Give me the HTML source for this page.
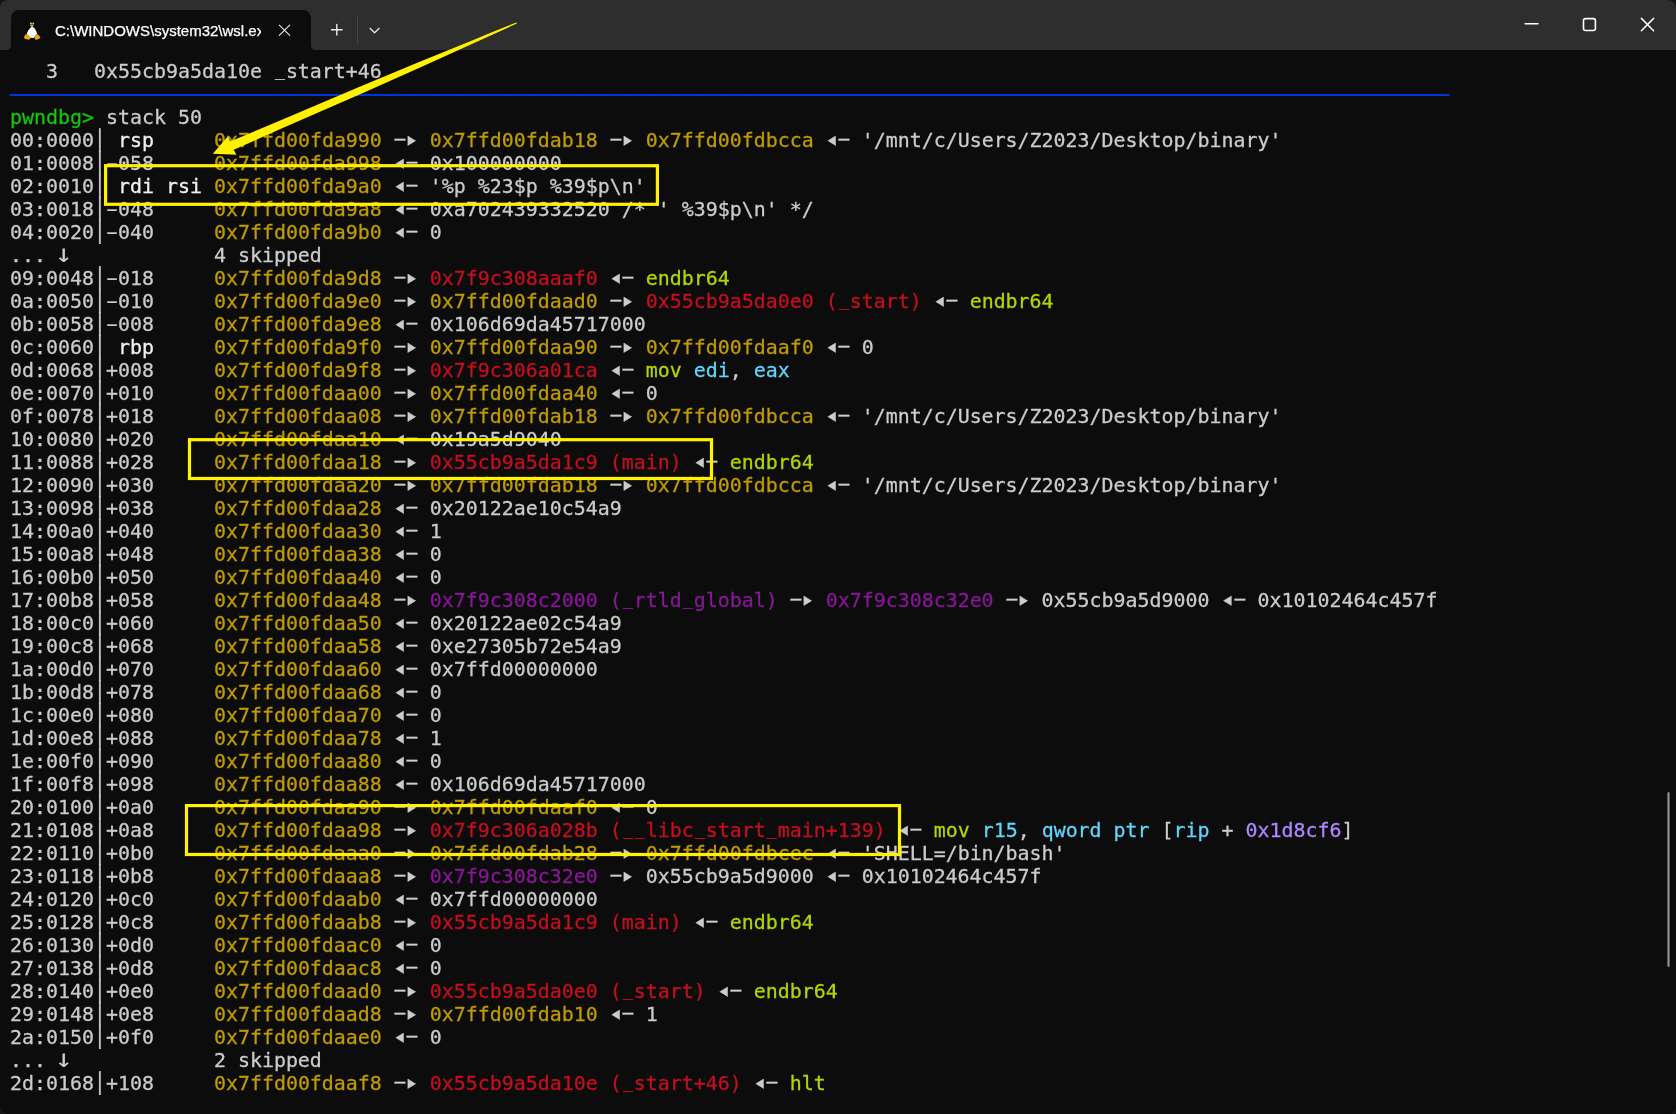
<!DOCTYPE html>
<html lang="en">
<head>
<meta charset="utf-8">
<title>C:\WINDOWS\system32\wsl.exe</title>
<style>
html,body{margin:0;padding:0;background:#161616;}
body{width:1676px;height:1114px;overflow:hidden;position:relative;}
#win{position:absolute;left:0;top:0;width:1676px;height:1114px;background:#0c0c0c;overflow:hidden;border-radius:8px;}
#titlebar{position:absolute;left:0;top:0;width:1676px;height:50px;background:#2e2e2e;}
#tabtitle{-webkit-text-stroke:0.25px #fff;will-change:transform;position:absolute;left:54.5px;top:18.6px;width:205.5px;height:24px;line-height:24px;overflow:hidden;white-space:nowrap;color:#fff;font-family:"Liberation Sans",sans-serif;font-size:15px;}
#term{-webkit-text-stroke:0.28px;will-change:transform;position:absolute;left:10px;top:60px;width:1650px;font-family:"DejaVu Sans Mono", "Liberation Mono", monospace;font-size:19.93px;line-height:23px;color:#cccccc;}
.ln{height:23px;white-space:pre;}
.y{color:#c19c00;}
.r{color:#c50f1f;}
.g{color:#afd700;}
.c{color:#5fd7ff;}
.p{color:#881798;}
.l{color:#af87ff;}
.b{color:#f2f2f2;}
.pg{color:#16c60c;}
.line{color:#0037da;display:inline-block;height:23px;vertical-align:top;position:relative;top:1px;background:linear-gradient(to bottom,transparent 10px,#0037da 10px,#0037da 12px,transparent 12px);}
.bar{color:#cccccc;}
svg{position:absolute;left:0;top:0;overflow:visible;}
.d,.t{display:inline-block;width:12px;height:23px;vertical-align:top;position:relative;}
.d{-webkit-text-stroke:0.3px currentColor;transform:translateY(-1.8px) scaleX(0.9);}
.t{transform:translateY(-1.5px) scaleY(1.22);transform-origin:50% 58%;}
.dn,.hy,.us{display:inline-block;width:12px;height:23px;vertical-align:top;position:relative;}
.dn{transform:scale(1.5,1.25);transform-origin:50% 78%;-webkit-text-stroke:0;}
.hy{transform:scaleX(1.8);-webkit-text-stroke:0.2px currentColor;}
#sb{position:absolute;left:1667px;top:792px;width:3px;height:175px;border-radius:1.5px;background:linear-gradient(to right,#585858 0,#585858 33%,#939393 33%,#939393 67%,#585858 67%);}
.us{transform:translateY(-2.6px) scaleX(0.82);-webkit-text-stroke:0.45px currentColor;}

</style>
</head>
<body>
<div id="win">
<div id="titlebar">
<svg id="chrome" width="1676" height="60" viewBox="0 0 1676 60">
<path id="tabshape" fill="#0c0c0c" d="M6.5,50 A4.5,4.5 0 0 0 11,45.5 L11,18 A8,8 0 0 1 19,10 L303,10 A8,8 0 0 1 311,18 L311,45.5 A4.5,4.5 0 0 0 315.5,50 Z"/>
<g id="tux">
<ellipse cx="32.4" cy="24.6" rx="3.3" ry="4.4" fill="#000"/>
<path d="M32.1,24 C27,27 25.2,33 25.6,38.5 L38.8,38.5 C39.2,33 37.2,27 32.1,24 Z" fill="#000"/>
<path d="M32.2,26.5 C30,27.6 27.1,31.6 26.9,34 C27.2,35.4 28.8,35.8 29.6,36.9 C30.4,37.9 31.2,38.2 32.4,38.1 C33.8,38.1 34.6,37.6 35,36.6 C35.2,35.2 36.4,34.6 37.2,33.8 C36.8,31 34.6,27.6 32.2,26.5 Z" fill="#fff"/>
<ellipse cx="30.9" cy="23.5" rx="0.9" ry="1" fill="#e6e6e6"/>
<ellipse cx="33.3" cy="23.5" rx="0.9" ry="1" fill="#e6e6e6"/>
<path d="M30,25 C30.8,24.3 32.8,24.3 33.8,25 C33.4,26.4 32.4,27 31.8,27 C31,27 30.2,26.2 30,25 Z" fill="#e5a712"/>
<path d="M24,37.6 C24.4,35.6 25.6,34 27,33.8 C28.2,34 29.6,36.4 30.3,38 C30.4,39.3 29.4,39.8 28,39.6 C26.4,39.4 24.2,39 24,37.6 Z" fill="#e5a712"/>
<path d="M35,35 C35.4,34.2 37.2,34 38,34.6 C38.8,35.6 40.2,36.6 40.4,37.6 C40.2,38.4 37.6,39.8 36.2,39.8 C34.8,39.6 34.6,38.4 34.8,37.2 Z" fill="#e5a712"/>
</g>
<g fill="none" stroke="#ececec" stroke-linecap="round">
<path stroke-width="1.1" d="M279.3,25.2 L289.7,35.4 M289.7,25.2 L279.3,35.4"/>
<path stroke-width="1.4" d="M331.5,29.8 L342.1,29.8 M336.8,24.5 L336.8,35.1"/>
<path stroke-width="1.2" stroke-linejoin="round" d="M370,28.3 L374.6,32.8 L379.2,28.3"/>
</g>
<path d="M357.5,15 L357.5,44.5" stroke="#444" stroke-width="1" fill="none"/>
<g fill="none" stroke="#fff" stroke-linecap="round">
<path stroke-width="1.6" d="M1525.2,23.8 L1537.9,23.8"/>
<rect x="1583.5" y="18.6" width="11.9" height="11.9" rx="2" ry="2" stroke-width="1.6"/>
<path stroke-width="1.5" d="M1641.4,18.4 L1653.6,30.7 M1653.6,18.4 L1641.4,30.7"/>
</g>
</svg>
<div id="tabtitle">C:\WINDOWS\system32\wsl.exe</div>
</div>

<div id="term">
<div class="ln">   3   0x55cb9a5da10e <span class="us">_</span>start+46</div>
<div class="ln"><span class="line">────────────────────────────────────────────────────────────────────────────────────────────────────────────────────────</span></div>
<div class="ln"><span class="pg">pwndbg&gt; </span>stack 50</div>
<div class="ln">00:0000<span class="bar">│</span> <span class="b">rsp</span>     <span class="y">0x7ffd00fda990</span> <span class="d">—</span><span class="t">▸</span> <span class="y">0x7ffd00fdab18</span> <span class="d">—</span><span class="t">▸</span> <span class="y">0x7ffd00fdbcca</span> <span class="t">◂</span><span class="d">—</span> '/mnt/c/Users/Z2023/Desktop/binary'</div>
<div class="ln">01:0008<span class="bar">│</span><span class="hy">-</span>058     <span class="y">0x7ffd00fda998</span> <span class="t">◂</span><span class="d">—</span> 0x100000000</div>
<div class="ln">02:0010<span class="bar">│</span> <span class="b">rdi rsi</span> <span class="y">0x7ffd00fda9a0</span> <span class="t">◂</span><span class="d">—</span> '%p %23$p %39$p\n'</div>
<div class="ln">03:0018<span class="bar">│</span><span class="hy">-</span>048     <span class="y">0x7ffd00fda9a8</span> <span class="t">◂</span><span class="d">—</span> 0xa702439332520 /* ' %39$p\n' */</div>
<div class="ln">04:0020<span class="bar">│</span><span class="hy">-</span>040     <span class="y">0x7ffd00fda9b0</span> <span class="t">◂</span><span class="d">—</span> 0</div>
<div class="ln">... <span class="dn">↓</span>            4 skipped</div>
<div class="ln">09:0048<span class="bar">│</span><span class="hy">-</span>018     <span class="y">0x7ffd00fda9d8</span> <span class="d">—</span><span class="t">▸</span> <span class="r">0x7f9c308aaaf0</span> <span class="t">◂</span><span class="d">—</span> <span class="g">endbr64</span></div>
<div class="ln">0a:0050<span class="bar">│</span><span class="hy">-</span>010     <span class="y">0x7ffd00fda9e0</span> <span class="d">—</span><span class="t">▸</span> <span class="y">0x7ffd00fdaad0</span> <span class="d">—</span><span class="t">▸</span> <span class="r">0x55cb9a5da0e0 (<span class="us">_</span>start)</span> <span class="t">◂</span><span class="d">—</span> <span class="g">endbr64</span></div>
<div class="ln">0b:0058<span class="bar">│</span><span class="hy">-</span>008     <span class="y">0x7ffd00fda9e8</span> <span class="t">◂</span><span class="d">—</span> 0x106d69da45717000</div>
<div class="ln">0c:0060<span class="bar">│</span> <span class="b">rbp</span>     <span class="y">0x7ffd00fda9f0</span> <span class="d">—</span><span class="t">▸</span> <span class="y">0x7ffd00fdaa90</span> <span class="d">—</span><span class="t">▸</span> <span class="y">0x7ffd00fdaaf0</span> <span class="t">◂</span><span class="d">—</span> 0</div>
<div class="ln">0d:0068<span class="bar">│</span>+008     <span class="y">0x7ffd00fda9f8</span> <span class="d">—</span><span class="t">▸</span> <span class="r">0x7f9c306a01ca</span> <span class="t">◂</span><span class="d">—</span> <span class="g">mov</span> <span class="c">edi</span>, <span class="c">eax</span></div>
<div class="ln">0e:0070<span class="bar">│</span>+010     <span class="y">0x7ffd00fdaa00</span> <span class="d">—</span><span class="t">▸</span> <span class="y">0x7ffd00fdaa40</span> <span class="t">◂</span><span class="d">—</span> 0</div>
<div class="ln">0f:0078<span class="bar">│</span>+018     <span class="y">0x7ffd00fdaa08</span> <span class="d">—</span><span class="t">▸</span> <span class="y">0x7ffd00fdab18</span> <span class="d">—</span><span class="t">▸</span> <span class="y">0x7ffd00fdbcca</span> <span class="t">◂</span><span class="d">—</span> '/mnt/c/Users/Z2023/Desktop/binary'</div>
<div class="ln">10:0080<span class="bar">│</span>+020     <span class="y">0x7ffd00fdaa10</span> <span class="t">◂</span><span class="d">—</span> 0x19a5d9040</div>
<div class="ln">11:0088<span class="bar">│</span>+028     <span class="y">0x7ffd00fdaa18</span> <span class="d">—</span><span class="t">▸</span> <span class="r">0x55cb9a5da1c9 (main)</span> <span class="t">◂</span><span class="d">—</span> <span class="g">endbr64</span></div>
<div class="ln">12:0090<span class="bar">│</span>+030     <span class="y">0x7ffd00fdaa20</span> <span class="d">—</span><span class="t">▸</span> <span class="y">0x7ffd00fdab18</span> <span class="d">—</span><span class="t">▸</span> <span class="y">0x7ffd00fdbcca</span> <span class="t">◂</span><span class="d">—</span> '/mnt/c/Users/Z2023/Desktop/binary'</div>
<div class="ln">13:0098<span class="bar">│</span>+038     <span class="y">0x7ffd00fdaa28</span> <span class="t">◂</span><span class="d">—</span> 0x20122ae10c54a9</div>
<div class="ln">14:00a0<span class="bar">│</span>+040     <span class="y">0x7ffd00fdaa30</span> <span class="t">◂</span><span class="d">—</span> 1</div>
<div class="ln">15:00a8<span class="bar">│</span>+048     <span class="y">0x7ffd00fdaa38</span> <span class="t">◂</span><span class="d">—</span> 0</div>
<div class="ln">16:00b0<span class="bar">│</span>+050     <span class="y">0x7ffd00fdaa40</span> <span class="t">◂</span><span class="d">—</span> 0</div>
<div class="ln">17:00b8<span class="bar">│</span>+058     <span class="y">0x7ffd00fdaa48</span> <span class="d">—</span><span class="t">▸</span> <span class="p">0x7f9c308c2000 (<span class="us">_</span>rtld<span class="us">_</span>global)</span> <span class="d">—</span><span class="t">▸</span> <span class="p">0x7f9c308c32e0</span> <span class="d">—</span><span class="t">▸</span> 0x55cb9a5d9000 <span class="t">◂</span><span class="d">—</span> 0x10102464c457f</div>
<div class="ln">18:00c0<span class="bar">│</span>+060     <span class="y">0x7ffd00fdaa50</span> <span class="t">◂</span><span class="d">—</span> 0x20122ae02c54a9</div>
<div class="ln">19:00c8<span class="bar">│</span>+068     <span class="y">0x7ffd00fdaa58</span> <span class="t">◂</span><span class="d">—</span> 0xe27305b72e54a9</div>
<div class="ln">1a:00d0<span class="bar">│</span>+070     <span class="y">0x7ffd00fdaa60</span> <span class="t">◂</span><span class="d">—</span> 0x7ffd00000000</div>
<div class="ln">1b:00d8<span class="bar">│</span>+078     <span class="y">0x7ffd00fdaa68</span> <span class="t">◂</span><span class="d">—</span> 0</div>
<div class="ln">1c:00e0<span class="bar">│</span>+080     <span class="y">0x7ffd00fdaa70</span> <span class="t">◂</span><span class="d">—</span> 0</div>
<div class="ln">1d:00e8<span class="bar">│</span>+088     <span class="y">0x7ffd00fdaa78</span> <span class="t">◂</span><span class="d">—</span> 1</div>
<div class="ln">1e:00f0<span class="bar">│</span>+090     <span class="y">0x7ffd00fdaa80</span> <span class="t">◂</span><span class="d">—</span> 0</div>
<div class="ln">1f:00f8<span class="bar">│</span>+098     <span class="y">0x7ffd00fdaa88</span> <span class="t">◂</span><span class="d">—</span> 0x106d69da45717000</div>
<div class="ln">20:0100<span class="bar">│</span>+0a0     <span class="y">0x7ffd00fdaa90</span> <span class="d">—</span><span class="t">▸</span> <span class="y">0x7ffd00fdaaf0</span> <span class="t">◂</span><span class="d">—</span> 0</div>
<div class="ln">21:0108<span class="bar">│</span>+0a8     <span class="y">0x7ffd00fdaa98</span> <span class="d">—</span><span class="t">▸</span> <span class="r">0x7f9c306a028b (<span class="us">_</span><span class="us">_</span>libc<span class="us">_</span>start<span class="us">_</span>main+139)</span> <span class="t">◂</span><span class="d">—</span> <span class="g">mov</span> <span class="c">r15</span>, <span class="c">qword ptr</span> [<span class="c">rip</span> + <span class="l">0x1d8cf6</span>]</div>
<div class="ln">22:0110<span class="bar">│</span>+0b0     <span class="y">0x7ffd00fdaaa0</span> <span class="d">—</span><span class="t">▸</span> <span class="y">0x7ffd00fdab28</span> <span class="d">—</span><span class="t">▸</span> <span class="y">0x7ffd00fdbcec</span> <span class="t">◂</span><span class="d">—</span> 'SHELL=/bin/bash'</div>
<div class="ln">23:0118<span class="bar">│</span>+0b8     <span class="y">0x7ffd00fdaaa8</span> <span class="d">—</span><span class="t">▸</span> <span class="p">0x7f9c308c32e0</span> <span class="d">—</span><span class="t">▸</span> 0x55cb9a5d9000 <span class="t">◂</span><span class="d">—</span> 0x10102464c457f</div>
<div class="ln">24:0120<span class="bar">│</span>+0c0     <span class="y">0x7ffd00fdaab0</span> <span class="t">◂</span><span class="d">—</span> 0x7ffd00000000</div>
<div class="ln">25:0128<span class="bar">│</span>+0c8     <span class="y">0x7ffd00fdaab8</span> <span class="d">—</span><span class="t">▸</span> <span class="r">0x55cb9a5da1c9 (main)</span> <span class="t">◂</span><span class="d">—</span> <span class="g">endbr64</span></div>
<div class="ln">26:0130<span class="bar">│</span>+0d0     <span class="y">0x7ffd00fdaac0</span> <span class="t">◂</span><span class="d">—</span> 0</div>
<div class="ln">27:0138<span class="bar">│</span>+0d8     <span class="y">0x7ffd00fdaac8</span> <span class="t">◂</span><span class="d">—</span> 0</div>
<div class="ln">28:0140<span class="bar">│</span>+0e0     <span class="y">0x7ffd00fdaad0</span> <span class="d">—</span><span class="t">▸</span> <span class="r">0x55cb9a5da0e0 (<span class="us">_</span>start)</span> <span class="t">◂</span><span class="d">—</span> <span class="g">endbr64</span></div>
<div class="ln">29:0148<span class="bar">│</span>+0e8     <span class="y">0x7ffd00fdaad8</span> <span class="d">—</span><span class="t">▸</span> <span class="y">0x7ffd00fdab10</span> <span class="t">◂</span><span class="d">—</span> 1</div>
<div class="ln">2a:0150<span class="bar">│</span>+0f0     <span class="y">0x7ffd00fdaae0</span> <span class="t">◂</span><span class="d">—</span> 0</div>
<div class="ln">... <span class="dn">↓</span>            2 skipped</div>
<div class="ln">2d:0168<span class="bar">│</span>+108     <span class="y">0x7ffd00fdaaf8</span> <span class="d">—</span><span class="t">▸</span> <span class="r">0x55cb9a5da10e (<span class="us">_</span>start+46)</span> <span class="t">◂</span><span class="d">—</span> <span class="g">hlt</span></div>
</div>
<div id="sb"></div>
<svg id="anno" width="1676" height="1114" viewBox="0 0 1676 1114">
<g fill="none" stroke="#fff100" stroke-width="3.2">
<rect x="105.6" y="165.7" width="551.8" height="38.6"/>
<rect x="189.5" y="439.7" width="522" height="38.8"/>
<rect x="186.5" y="805.6" width="713" height="48.9"/>
</g>
<polygon fill="#fff100" points="516.3,22.4 491.3,32.6 467.3,42.5 419.1,62.1 359.1,87.1 279.0,121.0 230.1,141.5 228.0,136.2 212.8,153.8 236.4,154.8 233.7,149.8 282.1,128.3 361.8,93.4 421.2,67.0 468.6,45.5 492.3,34.7 516.9,23.6"/>
</svg>

</div>
</body>
</html>
